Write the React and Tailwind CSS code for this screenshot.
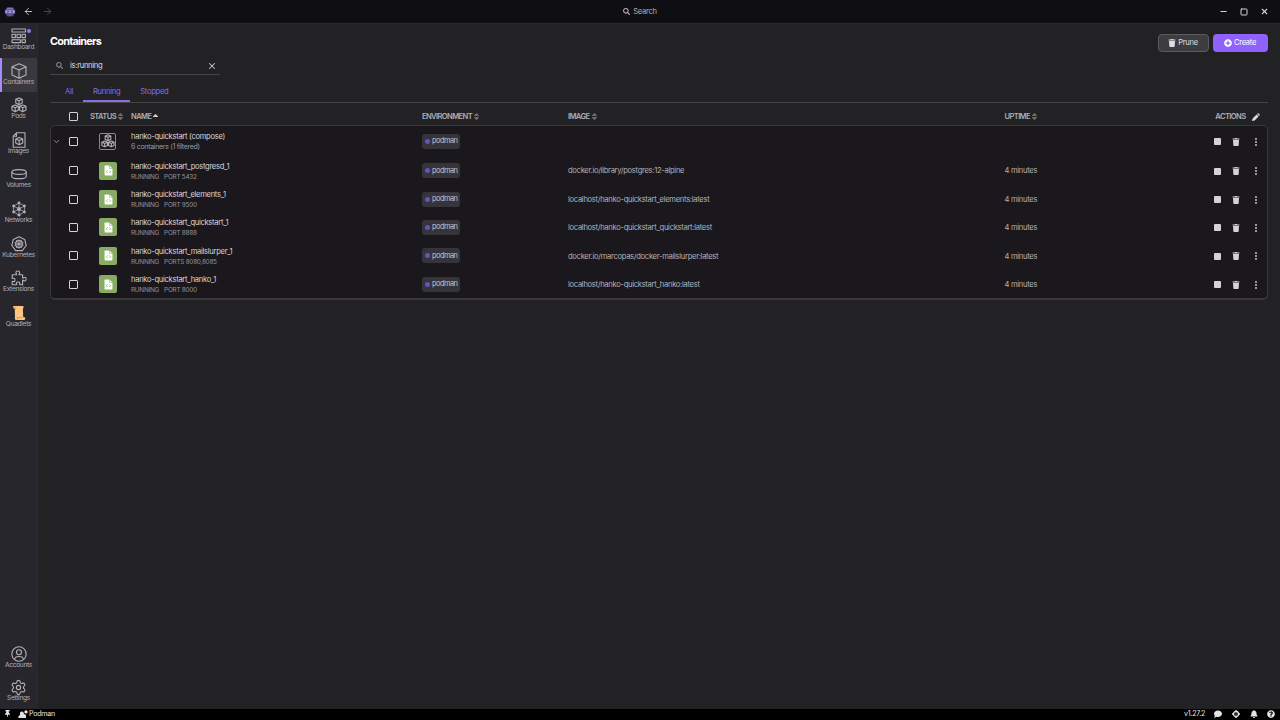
import React, { useState } from 'react';
import { FaTrash, FaSearch, FaPlusCircle, FaSort, FaSortUp, FaBell, FaThumbtack, FaComment, FaQuestionCircle } from 'react-icons/fa';
import { ArrowLeft, ArrowRight, ChevronDown, X, Minus, Square, Settings } from 'lucide-react';

const CubeShape = ({ x = 0, y = 0, s = 1 }) => (
  <g transform={`translate(${x} ${y}) scale(${s})`}>
    <path d="M8 0.8 L15 3.8 V12 L8 15.3 L1 12 V3.8 Z M1 3.8 L8 7 L15 3.8 M8 7 V15.3" vectorEffect="non-scaling-stroke" />
  </g>
);

const Svg = ({ children, className = 'w-4 h-4' }) => (
  <svg viewBox="0 0 16 16" className={className} fill="none" stroke="currentColor" strokeWidth="1.1" strokeLinejoin="round">
    {children}
  </svg>
);

const DashboardIcon = () => (
  <Svg>
    <rect x="1" y="1" width="13.5" height="3" />
    <rect x="1" y="6.2" width="3.4" height="3.4" />
    <rect x="6" y="6.2" width="3.4" height="3.4" />
    <rect x="11" y="6.2" width="3.4" height="3.4" />
    <rect x="1" y="11.8" width="8.4" height="2.8" />
    <rect x="11" y="11.8" width="3.4" height="2.8" />
  </Svg>
);

const ContainerIcon = () => (
  <Svg>
    <CubeShape />
  </Svg>
);

const PodsIcon = ({ className }) => (
  <Svg className={className}>
    <CubeShape x={4.3} y={0.6} s={0.46} />
    <CubeShape x={0.5} y={7.6} s={0.46} />
    <CubeShape x={8.1} y={7.6} s={0.46} />
  </Svg>
);

const ImagesIcon = () => (
  <Svg>
    <path d="M5.5 0.8 H14 V15.2 H2.2 V4.2 Z M5.5 0.8 V4.2 H2.2" />
    <CubeShape x={4.2} y={5} s={0.5} />
  </Svg>
);

const VolumesIcon = () => (
  <Svg>
    <ellipse cx="8" cy="6" rx="7.2" ry="2.4" />
    <path d="M0.8 6 V10.4 C0.8 13.4 15.2 13.4 15.2 10.4 V6" />
  </Svg>
);

const NetworksIcon = () => (
  <Svg>
    <path d="M8 2 L13.4 5 V11 L8 14 L2.6 11 V5 Z M8 2 V14 M2.6 5 L13.4 11 M13.4 5 L2.6 11" strokeWidth="0.8" />
    <g fill="currentColor" stroke="none">
      <circle cx="8" cy="1.8" r="1.4" />
      <circle cx="13.4" cy="5" r="1.4" />
      <circle cx="13.4" cy="11" r="1.4" />
      <circle cx="8" cy="14.2" r="1.4" />
      <circle cx="2.6" cy="11" r="1.4" />
      <circle cx="2.6" cy="5" r="1.4" />
      <circle cx="8" cy="8" r="1.9" />
    </g>
  </Svg>
);

const KubernetesIcon = () => (
  <Svg>
    <path d="M8 0.7 L13.7 3.4 L15.2 9.5 L11.3 14.6 H4.7 L0.8 9.5 L2.3 3.4 Z" />
    <circle cx="8" cy="8" r="3.4" />
    <path d="M8 3.2 V12.8 M3.4 6.6 L12.6 9.4 M12.6 6.6 L3.4 9.4 M5.2 12 L10.8 4 M10.8 12 L5.2 4" strokeWidth="0.7" />
  </Svg>
);

const ExtensionsIcon = () => (
  <Svg>
    <path d="M1.2 4.8 H5.6 C5.9 4 4.9 3.6 4.9 2.5 C4.9 0.5 8.7 0.5 8.7 2.5 C8.7 3.6 7.7 4 8 4.8 H11.6 V8 C12.3 8.4 12.6 7.2 13.7 7.2 C15.6 7.2 15.6 11 13.7 11 C12.6 11 12.3 9.8 11.6 10.2 V14.8 H8.6 C8.2 14 9 13.8 8.9 13 C8.6 11.7 5.6 11.7 5.3 13 C5.2 13.8 6 14 5.6 14.8 H1.2 V11.4 C2 11 2.2 11.7 3 11.6 C4.4 11.3 4.4 8.5 3 8.2 C2.2 8.1 2 8.8 1.2 8.4 Z" />
  </Svg>
);

const AccountIcon = () => (
  <Svg>
    <circle cx="8" cy="8" r="7.2" />
    <circle cx="8" cy="6.2" r="2.5" />
    <path d="M3.6 13.4 C4 9.6 12 9.6 12.4 13.4" />
  </Svg>
);

const QuadletsIcon = () => (
  <svg viewBox="0 0 16 16" className="w-4 h-4">
    <path d="M2.2 1.8 C2.2 1 3 1 3.6 1 H11.6 C13 1 13 3.2 11.9 3.4 L12.2 12 L13.6 12.2 C14.6 12.8 14.4 15 13 15 H5.2 C3.8 15 3.6 13.8 4 12.8 L3.8 3.8 C2.6 3.8 2.2 2.8 2.2 1.8 Z" fill="#fdc581" />
    <path d="M2.8 3.4 H4.8 V1.8 M6 14.8 C6.8 14 6.4 12.8 6 12.6 H12" fill="none" stroke="#d08f4d" strokeWidth="0.7" />
  </svg>
);

const PodmanLogo = () => (
  <svg viewBox="0 0 12 12" className="w-3 h-3">
    <path d="M3.4 1.2 H8.6 L11.2 4 V7.6 L8.6 10.6 H3.4 L0.8 7.6 V4 Z" fill="#493a83" />
    <path d="M3.4 1.8 H8.6 L10 3.6 H2 Z" fill="#8476bd" />
    <rect x="1.2" y="4.3" width="9.6" height="3" rx="1" fill="#a9a1cf" />
    <path d="M3 5.8 H5 M6.8 5.8 H9" stroke="#3b3268" strokeWidth="1" />
    <path d="M3.6 9 H8.4" stroke="#7567b1" strokeWidth="1" />
  </svg>
);

const FileCodeIcon = () => (
  <svg viewBox="0 0 10 12" className="w-[9px] h-[11px]">
    <path d="M1.2 0.5 H6 L9.4 3.9 V10.6 Q9.4 11.5 8.6 11.5 H1.4 Q0.6 11.5 0.6 10.6 V1.3 Q0.6 0.5 1.2 0.5 Z" fill="#fff" />
    <path d="M6.1 0.6 V3.8 H9.3" fill="none" stroke="#88ab62" strokeWidth="0.6" />
    <path d="M3.9 5.9 L2.6 7.3 L3.9 8.7 M6.1 5.9 L7.4 7.3 L6.1 8.7" fill="none" stroke="#88ab62" strokeWidth="0.9" />
  </svg>
);

const PencilIcon = () => (
  <svg viewBox="0 0 8 8" className="h-2 w-2" fill="#dcdadd">
    <path d="M0 8 L0.6 5.4 L4.6 1.4 L6.6 3.4 L2.6 7.4 Z M5.1 0.9 L6 0 L8 2 L7.1 2.9 Z" />
  </svg>
);

const navItems = [
  { label: 'Dashboard', icon: <DashboardIcon />, badge: true },
  { label: 'Containers', icon: <ContainerIcon /> },
  { label: 'Pods', icon: <PodsIcon /> },
  { label: 'Images', icon: <ImagesIcon /> },
  { label: 'Volumes', icon: <VolumesIcon /> },
  { label: 'Networks', icon: <NetworksIcon /> },
  { label: 'Kubernetes', icon: <KubernetesIcon /> },
  { label: 'Extensions', icon: <ExtensionsIcon /> },
  { label: 'Quadlets', icon: <QuadletsIcon /> },
];

const containers = [
  { name: 'hanko-quickstart_postgresd_1', port: 'PORT 5432', image: 'docker.io/library/postgres:12-alpine' },
  { name: 'hanko-quickstart_elements_1', port: 'PORT 9500', image: 'localhost/hanko-quickstart_elements:latest' },
  { name: 'hanko-quickstart_quickstart_1', port: 'PORT 8888', image: 'localhost/hanko-quickstart_quickstart:latest' },
  { name: 'hanko-quickstart_mailslurper_1', port: 'PORTS 8080,8085', image: 'docker.io/marcopas/docker-mailslurper:latest' },
  { name: 'hanko-quickstart_hanko_1', port: 'PORT 8000', image: 'localhost/hanko-quickstart_hanko:latest' },
];

const columns = 'grid grid-cols-[17.5px_30.5px_32px_291px_146px_436.5px_1fr] items-center';

const NavItem = ({ item, active, onClick }) => (
  <button
    onClick={onClick}
    className={`relative flex h-[34.6px] w-[37px] shrink-0 flex-col items-center border-l-2 pt-[5px] pr-[2px] ${
      active ? 'border-[#a78bfa] bg-[#3a383f]' : 'border-transparent'
    }`}
  >
    <span className="flex h-4 w-4 shrink-0 items-center justify-center">{item.icon}</span>
    <span className="mt-[-1px] text-[6.6px] leading-[9px] tracking-[-0.3px] whitespace-nowrap">{item.label}</span>
    {item.badge && <span className="absolute top-[6px] left-[25px] h-1 w-1 rounded-full bg-[#8b7cf8]" />}
  </button>
);

const Checkbox = () => (
  <span className="block h-[9px] w-[9px] rounded-[1px] border-[1.5px] border-[#d4d1d7]" />
);

const SortHeader = ({ children, active }) => (
  <div className="flex items-center gap-px">
    <span>{children}</span>
    {active ? <FaSortUp size={9} className="relative top-[1px] -ml-px text-[#d1ced3]" /> : <FaSort size={9} className="-ml-px text-[#6d6b70]" />}
  </div>
);

const EnvBadge = () => (
  <span className="flex h-[15px] w-[38px] items-center gap-[2px] rounded-[3px] bg-[#36343b] pl-[3px] text-[7.4px] tracking-[-0.5px] text-[#c4c1c8]">
    <span className="h-[5px] w-[5px] rounded-full bg-[#6554c0]" />
    podman
  </span>
);

const Actions = () => (
  <div className="flex items-center justify-end pt-px pr-[10px] text-[#d6d2d9]">
    <span className="h-[7px] w-[7px] rounded-[1px] bg-[#d6d2d9]" />
    <FaTrash size={8} className="ml-[11px]" />
    <svg viewBox="0 0 2 8" className="ml-[15px] h-2 w-[2px]" fill="currentColor">
      <circle cx="1" cy="1" r="0.9" />
      <circle cx="1" cy="4" r="0.9" />
      <circle cx="1" cy="7" r="0.9" />
    </svg>
  </div>
);

const App = () => {
  const [page, setPage] = useState('Containers');
  const [tab, setTab] = useState('Running');
  const [filter, setFilter] = useState('is:running');

  return (
    <div className="flex h-[720px] w-[1280px] flex-col overflow-hidden bg-[#222124] font-['Inter',sans-serif] text-[7.6px] leading-[10px] tracking-[-0.3px] text-[#b3b0b6]">
      {/* Title bar */}
      <header className="grid h-6 shrink-0 grid-cols-3 items-center border-b border-[#2b292e] bg-[#0f0e12]">
        <div className="flex items-center pl-[4px]">
          <PodmanLogo />
          <ArrowLeft size={11} className="ml-[7px] text-[#c9c6cc]" />
          <ArrowRight size={11} className="ml-2 text-[#4b494e]" />
        </div>
        <div className="flex items-center justify-center gap-[3px]">
          <FaSearch size={7} />
          <span>Search</span>
        </div>
        <div className="flex items-center justify-end pr-[11px] text-[#d4d2d6]">
          <Minus size={9} strokeWidth={3} />
          <Square size={8} strokeWidth={3} className="ml-[12px]" />
          <X size={9} strokeWidth={3} className="ml-[12px]" />
        </div>
      </header>

      <div className="flex min-h-0 flex-1">
        {/* Sidebar */}
        <nav className="flex w-[38px] shrink-0 flex-col border-r border-[#2c2a30] bg-[#28262d]">
          <div className="mt-[-1px] flex flex-col">
            {navItems.map(item => (
              <NavItem key={item.label} item={item} active={page === item.label} onClick={() => setPage(item.label)} />
            ))}
          </div>
          <div className="mt-auto flex flex-col">
            <div className="-mb-px">
              <NavItem item={{ label: 'Accounts', icon: <AccountIcon /> }} />
            </div>
            <NavItem item={{ label: 'Settings', icon: <Settings size={17} strokeWidth={1.6} className="shrink-0" /> }} />
          </div>
        </nav>

        {/* Page */}
        <main className="flex min-w-0 flex-1 flex-col pr-[12.5px] pl-3">
          <div className="flex h-[35px] items-start justify-between pt-[10px]">
            <h1 className="text-[10.8px] leading-[15px] font-bold tracking-[-0.7px] text-white">Containers</h1>
            <div className="flex gap-1">
              <button className="flex h-[18px] w-[51px] items-center justify-center gap-[2px] rounded-[4px] border border-[#5c5a5e] bg-[#3e3c40] text-[#dedce0]">
                <FaTrash size={8} /> Prune
              </button>
              <button className="flex h-[18px] w-[55px] items-center justify-center gap-[2px] rounded-[4px] bg-[#8f62fb] text-white">
                <FaPlusCircle size={8} /> Create
              </button>
            </div>
          </div>

          <div className="flex h-4 w-[170px] items-center border-b border-[#464449] pr-[3px] pb-[2px] pl-[6px]">
            <FaSearch size={7} className="text-[#88868a]" />
            <input
              value={filter}
              onChange={(e) => setFilter(e.target.value)}
              className="ml-[7px] h-[10px] w-[130px] bg-transparent text-[#e0dee2] outline-none"
            />
            <X size={10} strokeWidth={2.5} className="ml-auto text-[#c5c3c7]" />
          </div>

          <div className="flex h-7 items-end border-b border-[#464449] text-[#8b6ee0]">
            {['All', 'Running', 'Stopped'].map(name => (
              <button
                key={name}
                onClick={() => setTab(name)}
                className={`h-[20px] border-b-2 px-[10px] pt-[2px] first:ml-[5px] ${tab === name ? 'border-[#8b6ee0]' : 'border-transparent'}`}
              >
                {name}
              </button>
            ))}
          </div>

          <div className={`${columns} h-[22px] pt-[5px] pl-[1px] font-semibold tracking-[-0.62px] text-[#b0adb3]`}>
            <span />
            <Checkbox />
            <div className="-ml-[9px]"><SortHeader>STATUS</SortHeader></div>
            <SortHeader active>NAME</SortHeader>
            <SortHeader>ENVIRONMENT</SortHeader>
            <SortHeader>IMAGE</SortHeader>
            <div className="flex items-center justify-between pr-2">
              <SortHeader>UPTIME</SortHeader>
              <div className="flex items-center gap-[6px]">
                ACTIONS
                <PencilIcon />
              </div>
            </div>
          </div>

          <div className="h-[174.5px] shrink-0 overflow-hidden rounded-[5px] border border-b-2 border-[#39373c] bg-[#1a181d]">
            <div className={`${columns} h-[30.5px]`}>
              <ChevronDown size={9} className="ml-[1px]" />
              <Checkbox />
              <span className="flex h-[17px] w-[17px] items-center justify-center rounded-[2px] border border-[#8b888e] text-[#b3b0b6]">
                <PodsIcon className="h-[14px] w-[14px] shrink-0" />
              </span>
              <div className="pt-[2px]">
                <div className="text-[#d8d5db]">hanko-quickstart (compose)</div>
                <div className="text-[7px] text-[#9d9aa1]">6 containers (1 filtered)</div>
              </div>
              <EnvBadge />
              <span />
              <Actions />
            </div>
            {containers.map(c => (
              <div key={c.name} className={`${columns} h-[28.4px]`}>
                <span />
                <Checkbox />
                <span className="flex h-[18px] w-[18px] items-center justify-center rounded-[2px] bg-[#88ab62]">
                  <FileCodeIcon />
                </span>
                <div className="pt-[2px]">
                  <div className="text-[#d8d5db]">{c.name}</div>
                  <div className="flex gap-[5px] text-[6.4px] tracking-[-0.25px] text-[#96939a]">
                    <span>RUNNING</span>
                    <span>{c.port}</span>
                  </div>
                </div>
                <EnvBadge />
                <span className="pt-[1.5px]">{c.image}</span>
                <div className="flex items-center justify-between">
                  <span className="pt-[1.5px]">4 minutes</span>
                  <Actions />
                </div>
              </div>
            ))}
          </div>
        </main>
      </div>

      {/* Status bar */}
      <footer className="flex h-[11px] shrink-0 items-center justify-between bg-black pr-[5px] pb-[2px] pl-1 text-[7.2px] text-[#e4e2e6]">
        <div className="flex items-center">
          <FaThumbtack size={7} />
          <svg viewBox="0 0 10 8" className="ml-[7px] h-2 w-[10px]" fill="currentColor">
            <path d="M0.4 8 V6.2 L2 5 V2.6 L4 1.2 L5.6 2.4 L6 4 L8 5 V8 Z" />
            <circle cx="8" cy="1.9" r="1.7" />
          </svg>
          <span className="ml-[1px]">Podman</span>
        </div>
        <div className="flex items-center">
          <span>v1.27.2</span>
          <FaComment size={8} className="ml-[9px]" />
          <svg viewBox="0 0 8 8" className="ml-[10px] h-2 w-2" fill="none" stroke="currentColor" strokeWidth="1.3">
            <circle cx="4" cy="4" r="2.5" />
            <path d="M4 0 V1.6 M4 6.4 V8 M0 4 H1.6 M6.4 4 H8" />
            <circle cx="4" cy="4" r="0.6" fill="currentColor" stroke="none" />
          </svg>
          <FaBell size={8} className="ml-[10px]" />
          <FaQuestionCircle size={8} className="ml-[9px]" />
        </div>
      </footer>
    </div>
  );
};

export default App;
